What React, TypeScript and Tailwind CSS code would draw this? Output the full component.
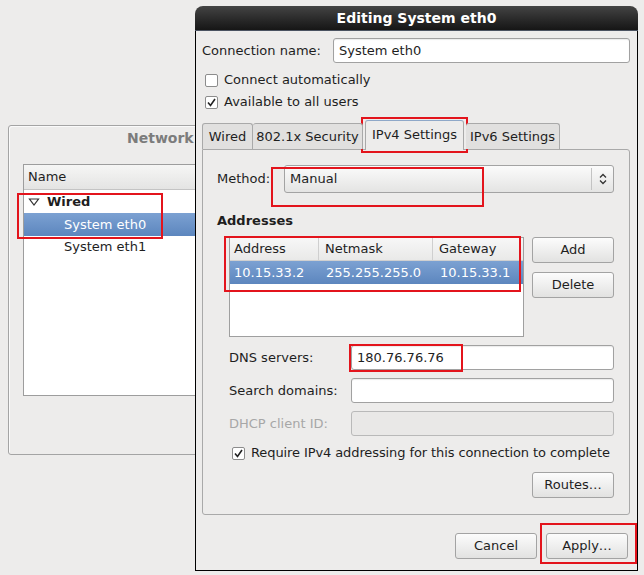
import React from 'react';

const font = { fontFamily: '"DejaVu Sans", Verdana, sans-serif' };

function Check({ checked }: { checked?: boolean }) {
  return (
    <div className="w-[13px] h-[13px] border border-[#8c8c8c] bg-white rounded-[2px] flex items-center justify-center shrink-0">
      {checked && (
        <svg width="9" height="9" viewBox="0 0 9 9">
          <path d="M1 4.5 L3.5 7.5 L8 1" fill="none" stroke="#222" strokeWidth="1.6" />
        </svg>
      )}
    </div>
  );
}

function Button({ label, className = '' }: { label: string; className?: string }) {
  return (
    <div
      className={`w-[82px] h-[26px] border border-[#a3a3a3] rounded-[3px] bg-gradient-to-b from-[#fcfcfc] to-[#e2e2e1] flex items-center justify-center text-[13px] text-[#1e1e1e] ${className}`}
    >
      {label}
    </div>
  );
}

function Entry({ value, width, disabled }: { value?: string; width: string; disabled?: boolean }) {
  return (
    <div
      className={`${width} h-[25px] border rounded-[3px] flex items-center pl-[5px] text-[13px] ${
        disabled
          ? 'bg-[#e9e8e7] border-[#b9b9b9]'
          : 'bg-white border-[#a1a1a1] shadow-[inset_0_1px_1px_rgba(0,0,0,0.08)]'
      }`}
    >
      {value}
    </div>
  );
}

function RedBox({ className }: { className: string }) {
  return <div className={`absolute border-2 border-[#e3141c] pointer-events-none ${className}`} />;
}

export default function App() {
  return (
    <div className="relative w-[644px] h-[575px] overflow-hidden bg-[#edeceb] text-[#1e1e1e]" style={font}>
      {/* Background network window */}
      <div className="absolute left-[8px] top-[125px] w-[420px] h-[330px] border border-[#a4a4a4] rounded-[3px] bg-[#edeceb] shadow-[inset_1px_1px_0_#fafafa]">
        <div className="h-[38px] pl-[118px] text-[14px] font-bold text-[#7c7c7c] leading-[24px]">Network</div>
        <div className="ml-[14px] w-[380px] h-[232px] border border-[#9d9d9d] bg-white">
          <div className="h-[25px] border-b border-[#c4c4c4] bg-gradient-to-b from-[#f6f6f5] to-[#e4e4e3] flex items-center pl-[4px] text-[13px]">
            Name
          </div>
          <div className="h-[23px] flex items-center pl-[4px] text-[13px]">
            <svg width="12" height="10" viewBox="0 0 12 10" className="mr-[7px]">
              <polygon points="1.5,2 10.5,2 6,8" fill="none" stroke="#333" strokeWidth="1.2" />
            </svg>
            <span className="font-bold">Wired</span>
          </div>
          <div className="h-[23px] flex items-center pl-[40px] text-[13px] text-white bg-gradient-to-b from-[#7ca1d2] to-[#5c86be]">
            System eth0
          </div>
          <div className="h-[22px] flex items-center pl-[40px] text-[13px]">System eth1</div>
        </div>
      </div>

      {/* Editing dialog */}
      <div className="absolute left-[195px] top-[6px] w-[443px] h-[565px] flex flex-col">
        <div className="h-[25px] rounded-t-[8px] bg-gradient-to-b from-[#444444] to-[#161616] border-b border-[#4b5361] flex items-center justify-center text-white text-[14px] font-bold">
          Editing System eth0
        </div>
        <div className="flex-1 border-x border-b border-black bg-[#edeceb] pl-[6px] flex flex-col">
          {/* Connection name */}
          <div className="mt-[7px] h-[25px] flex items-center text-[13px]">
            <div className="w-[131px]">Connection name:</div>
            <Entry value="System eth0" width="w-[297px]" />
          </div>

          {/* Checkboxes */}
          <div className="mt-[6px] h-[22px] flex items-center pl-[3px] gap-[6px] text-[13px]">
            <Check />
            <span>Connect automatically</span>
          </div>
          <div className="h-[22px] flex items-center pl-[3px] gap-[6px] text-[13px]">
            <Check checked />
            <span>Available to all users</span>
          </div>

          {/* Tabs */}
          <div className="mt-[7px] h-[29px] flex items-end text-[13px] relative z-10">
            <div className="w-[51px] h-[26px] border border-b-0 border-[#a9a9a9] rounded-t-[3px] bg-[#e1e0df] flex items-center justify-center">
              Wired
            </div>
            <div className="w-[110px] h-[26px] border border-l-0 border-b-0 border-[#a9a9a9] rounded-t-[3px] bg-[#e1e0df] flex items-center justify-center">
              802.1x Security
            </div>
            <div className="ml-[2px] w-[99px] h-[30px] -mb-[1px] border border-b-0 border-[#a9a9a9] border-t-[#8fa8c8] rounded-t-[3px] bg-[#edeceb] flex items-center justify-center pb-[2px]">
              IPv4 Settings
            </div>
            <div className="ml-[2px] w-[94px] h-[26px] border border-l-0 border-b-0 border-[#a9a9a9] rounded-t-[3px] bg-[#e1e0df] flex items-center justify-center">
              IPv6 Settings
            </div>
          </div>

          {/* Notebook frame */}
          <div className="w-[428px] h-[366px] border border-[#a9a9a9] rounded-b-[3px] rounded-tr-[3px] bg-[#edeceb] pl-[14px] pr-[15px] pt-[15px] pb-[16px] flex flex-col text-[13px]">
            <div className="h-[28px] flex items-center">
              <div className="w-[67px]">Method:</div>
              <div className="w-[330px] h-[28px] border border-[#a3a3a3] rounded-[3px] bg-gradient-to-b from-[#fbfbfb] to-[#e4e4e3] flex items-center">
                <div className="flex-1 pl-[5px]">Manual</div>
                <div className="w-px h-[22px] bg-[#c3c3c3]" />
                <div className="w-[21px] flex items-center justify-center">
                  <svg width="8" height="12" viewBox="0 0 8 12">
                    <path d="M1 4.5 L4 1.5 L7 4.5 M1 7.5 L4 10.5 L7 7.5" fill="none" stroke="#333" strokeWidth="1.3" />
                  </svg>
                </div>
              </div>
            </div>

            <div className="mt-[18px] h-[20px] leading-[20px] font-bold">Addresses</div>

            <div className="mt-[6px] pl-[12px] flex gap-[8px]">
              <div className="w-[295px] h-[100px] border border-[#9f9f9f] bg-white">
                <div className="h-[23px] flex border-b border-[#d0d0d0] bg-gradient-to-b from-[#f7f7f7] to-[#e9e9e8]">
                  <div className="w-[89px] pl-[4px] flex items-center border-r border-[#cfcfcf]">Address</div>
                  <div className="w-[114px] pl-[6px] flex items-center border-r border-[#cfcfcf]">Netmask</div>
                  <div className="flex-1 pl-[6px] flex items-center">Gateway</div>
                </div>
                <div className="h-[23px] flex text-white bg-gradient-to-b from-[#7ca1d2] to-[#5c86be]">
                  <div className="w-[89px] pl-[4px] flex items-center">10.15.33.2</div>
                  <div className="w-[114px] pl-[7px] flex items-center">255.255.255.0</div>
                  <div className="flex-1 pl-[7px] flex items-center">10.15.33.1</div>
                </div>
              </div>
              <div className="flex flex-col gap-[9px]">
                <Button label="Add" />
                <Button label="Delete" />
              </div>
            </div>

            <div className="mt-[8px] pl-[12px] flex flex-col gap-[8px]">
              <div className="h-[25px] flex items-center">
                <div className="w-[122px]">DNS servers:</div>
                <Entry value="180.76.76.76" width="w-[263px]" />
              </div>
              <div className="h-[25px] flex items-center">
                <div className="w-[122px]">Search domains:</div>
                <Entry width="w-[263px]" />
              </div>
              <div className="h-[25px] flex items-center">
                <div className="w-[122px] text-[#a7a7a7]">DHCP client ID:</div>
                <Entry width="w-[263px]" disabled />
              </div>
            </div>

            <div className="mt-[6px] h-[22px] pl-[15px] flex items-center gap-[6px] whitespace-nowrap">
              <Check checked />
              <span className="tracking-[-0.1px]">Require IPv4 addressing for this connection to complete</span>
            </div>

            <div className="mt-[8px] flex justify-end">
              <Button label="Routes…" />
            </div>
          </div>

          {/* Dialog buttons */}
          <div className="mt-[18px] w-[426px] flex justify-end gap-[9px]">
            <Button label="Cancel" />
            <Button label="Apply…" />
          </div>
        </div>
      </div>

      {/* Annotation boxes */}
      <RedBox className="left-[17px] top-[193px] w-[146px] h-[46px]" />
      <RedBox className="left-[361px] top-[117px] w-[107px] h-[36px]" />
      <RedBox className="left-[271px] top-[167px] w-[213px] h-[40px]" />
      <RedBox className="left-[224px] top-[236px] w-[297px] h-[56px]" />
      <RedBox className="left-[349px] top-[344px] w-[114px] h-[28px]" />
      <RedBox className="left-[540px] top-[523px] w-[97px] h-[41px]" />
    </div>
  );
}
